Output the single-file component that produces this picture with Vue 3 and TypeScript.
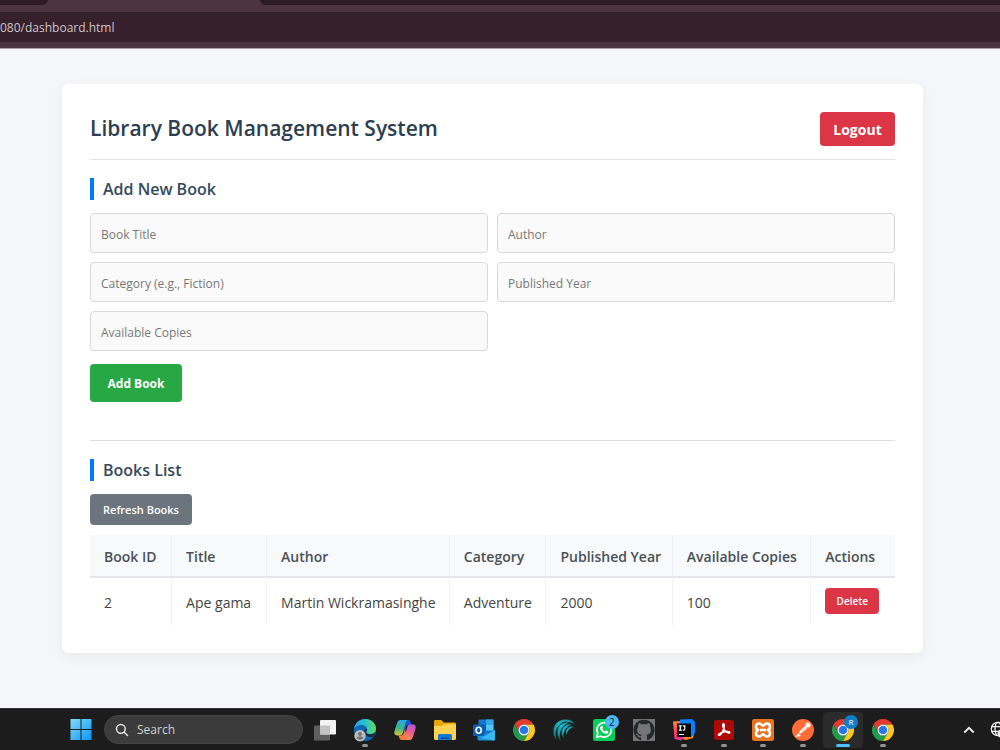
<script setup lang="ts">
import { reactive, ref } from 'vue'

interface Book {
  id: number
  title: string
  author: string
  category: string
  year: number
  copies: number
}

interface Field {
  key: 'title' | 'author' | 'category' | 'year' | 'copies'
  label: string
}

interface TaskbarApp {
  id: string
  name: string
  running?: boolean
  active?: boolean
}

const fields: Field[] = [
  { key: 'title', label: 'Book Title' },
  { key: 'author', label: 'Author' },
  { key: 'category', label: 'Category (e.g., Fiction)' },
  { key: 'year', label: 'Published Year' },
  { key: 'copies', label: 'Available Copies' },
]

const columns = ['Book ID', 'Title', 'Author', 'Category', 'Published Year', 'Available Copies', 'Actions']

const books = ref<Book[]>([
  { id: 2, title: 'Ape gama', author: 'Martin Wickramasinghe', category: 'Adventure', year: 2000, copies: 100 },
])

const form = reactive({ title: '', author: '', category: '', year: '', copies: '' })
const address = ref('080/dashboard.html')

const apps: TaskbarApp[] = [
  { id: 'tasks', name: 'Task View' },
  { id: 'edge', name: 'Edge', running: true },
  { id: 'copilot', name: 'Copilot' },
  { id: 'files', name: 'File Explorer' },
  { id: 'outlook', name: 'Outlook' },
  { id: 'chrome', name: 'Chrome' },
  { id: 'waves', name: 'Waves' },
  { id: 'whatsapp', name: 'WhatsApp' },
  { id: 'github', name: 'GitHub Desktop' },
  { id: 'idea', name: 'IntelliJ IDEA', running: true },
  { id: 'acrobat', name: 'Acrobat', running: true },
  { id: 'xampp', name: 'XAMPP', running: true },
  { id: 'postman', name: 'Postman', running: true },
  { id: 'chrome-profile', name: 'Chrome profile R', running: true, active: true },
  { id: 'chrome', name: 'Chrome window', running: true },
]

function addBook() {
  const nextId = Math.max(0, ...books.value.map((b) => b.id)) + 1
  books.value.push({
    id: nextId,
    title: form.title,
    author: form.author,
    category: form.category,
    year: Number(form.year),
    copies: Number(form.copies),
  })
}

function removeBook(id: number) {
  books.value = books.value.filter((b) => b.id !== id)
}
</script>

<template>
  <div class="screen">
    <header class="browser">
      <div class="tabs">
        <span class="tab-rest tab-left"></span>
        <span class="tab-rest tab-right"></span>
      </div>
      <div class="toolbar">
        <input v-model="address" class="address" type="text" aria-label="Address" />
      </div>
    </header>

    <main class="page">
      <div class="card">
        <div class="card-head">
          <h1>Library Book Management System</h1>
          <button type="button" class="btn logout">Logout</button>
        </div>

        <section>
          <h2>Add New Book</h2>
          <form @submit.prevent="addBook">
            <div class="fields">
              <input
                v-for="f in fields"
                :key="f.key"
                v-model="form[f.key]"
                type="text"
                :placeholder="f.label"
                :aria-label="f.label"
              />
            </div>
            <button type="submit" class="btn add">Add Book</button>
          </form>
        </section>

        <section class="list">
          <h2>Books List</h2>
          <button type="button" class="btn refresh">Refresh Books</button>
          <table>
            <colgroup>
              <col class="c-id" />
              <col class="c-title" />
              <col class="c-author" />
              <col class="c-category" />
              <col class="c-year" />
              <col class="c-copies" />
              <col class="c-actions" />
            </colgroup>
            <thead>
              <tr>
                <th v-for="c in columns" :key="c" scope="col">{{ c }}</th>
              </tr>
            </thead>
            <tbody>
              <tr v-for="b in books" :key="b.id">
                <td>{{ b.id }}</td>
                <td>{{ b.title }}</td>
                <td>{{ b.author }}</td>
                <td>{{ b.category }}</td>
                <td>{{ b.year }}</td>
                <td>{{ b.copies }}</td>
                <td><button type="button" class="btn delete" @click="removeBook(b.id)">Delete</button></td>
              </tr>
            </tbody>
          </table>
        </section>
      </div>
    </main>

    <footer class="taskbar">
      <button type="button" class="plain start" aria-label="Start">
        <svg viewBox="0 0 22 22" width="22" height="22">
          <defs>
            <linearGradient id="win" x1="0" y1="0" x2="22" y2="22" gradientUnits="userSpaceOnUse">
              <stop offset="0" stop-color="#7fdcfb" />
              <stop offset="1" stop-color="#0a93f5" />
            </linearGradient>
          </defs>
          <path fill="url(#win)" d="M.5 0h10v10H.5zM11.5 0h10v10h-10zM.5 11h10v10H.5zM11.5 11h10v10h-10z" />
        </svg>
      </button>

      <label class="search">
        <svg viewBox="0 0 16 16" width="16" height="16" fill="none" stroke="#e4e4e4" stroke-width="1.7" stroke-linecap="round">
          <circle cx="6.7" cy="6.7" r="5" />
          <path d="M10.5 10.5 14.3 14.3" />
        </svg>
        <input type="text" placeholder="Search" aria-label="Search" />
      </label>

      <nav class="apps" aria-label="Apps">
        <button
          v-for="(a, i) in apps"
          :key="i"
          type="button"
          class="plain app"
          :class="{ running: a.running, active: a.active }"
          :aria-label="a.name"
        >
          <svg v-if="a.id === 'tasks'" viewBox="0 0 24 24" width="24" height="24">
            <rect x="1" y="7.500" width="16" height="15" rx="1" fill="#5e5e5e" />
            <rect x="7" y="2" width="16" height="14.500" rx="1" fill="#f3f3f3" />
            <path d="M7 7.500h10v9H7z" fill="#c3c3c3" />
          </svg>

          <svg v-else-if="a.id === 'edge'" viewBox="0 0 24 24" width="24" height="24">
            <defs>
              <linearGradient id="edgeTop" x1="1" y1="8" x2="23" y2="9" gradientUnits="userSpaceOnUse">
                <stop offset="0" stop-color="#249ee0" />
                <stop offset=".5" stop-color="#2bc3d2" />
                <stop offset="1" stop-color="#62d957" />
              </linearGradient>
            </defs>
            <circle cx="12" cy="12" r="11" fill="#1068b8" />
            <path fill="url(#edgeTop)" d="M1 11C2 4.500 7 1 12.300 1 19 1 23 6 23 10.500c0 3.800-2.800 5.700-5.800 5.700-2.600 0-4.100-1-4.100-1.900 0-.8 1-1 1-3C14.100 8.700 11.500 7 8.300 7 4.900 7 2.200 9 1 11z" />
            <path fill="#1b2b39" d="M13.100 14.300c0 1 1.500 1.900 4.100 1.900 2.500 0 3.800-.6 5-1.600-.3 1.500-1 3-2.200 4.300-5 1-9.800-1.900-8.600-6.200.3-1.100 1.300-2 2.700-2 0 2-1 2.700-1 3.600z" />
            <circle cx="7" cy="17.700" r="5.700" fill="#bdbdbd" />
            <circle cx="7" cy="16" r="2" fill="#747474" />
            <path d="M3.600 20.600c.3-3 6.500-3 6.800 0-1.800 1.400-5 1.400-6.800 0z" fill="#747474" />
          </svg>

          <svg v-else-if="a.id === 'copilot'" viewBox="0 0 24 24" width="24" height="24">
            <defs>
              <linearGradient id="copA" x1="6" y1="2" x2="5" y2="19" gradientUnits="userSpaceOnUse">
                <stop offset="0" stop-color="#25a7ec" />
                <stop offset=".45" stop-color="#35b784" />
                <stop offset="1" stop-color="#f6cb26" />
              </linearGradient>
              <linearGradient id="copB" x1="19" y1="5" x2="12" y2="22" gradientUnits="userSpaceOnUse">
                <stop offset="0" stop-color="#a05be8" />
                <stop offset=".5" stop-color="#ec588f" />
                <stop offset="1" stop-color="#fb9a55" />
              </linearGradient>
            </defs>
            <path fill="#1d56cc" d="M10 2h5.400c1.300 0 1.900.9 2.300 2.200L18.700 7h-3c-1.900 0-2.500 1-3 2.600L10.500 17z" />
            <path fill="url(#copA)" d="M13 2H7.300C5.300 2 4.500 3.700 3.700 6L1.600 12.800c-.9 2.800 0 4.600 2.500 4.600h2.700c1.800 0 2.500-1 3-2.600L12.500 5c.5-1.600.8-2.300 2-3z" />
            <path fill="url(#copB)" d="M11 22h5.700c2 0 2.800-1.700 3.600-4l2.100-6.800c.9-2.800 0-4.600-2.500-4.600h-2.700c-1.800 0-2.500 1-3 2.600L11.500 19c-.5 1.600-.8 2.300-2 3z" />
            <path fill="#f5793d" d="M14 22H8.600c-1.300 0-1.900-.9-2.300-2.200l-.8-2.400h2.400c1.900 0 2.500-1 3-2.600l1.300-4.200z" />
          </svg>

          <svg v-else-if="a.id === 'files'" viewBox="0 0 24 24" width="24" height="24">
            <path fill="#e9a70b" d="M1 3.500C1 2.700 1.600 2 2.400 2h5.900l2.500 2.500h10.800c.8 0 1.400.6 1.400 1.400V12H1z" />
            <path fill="#ffd352" d="M1 8h7.800l2.300-1.800H23V20.600c0 .8-.6 1.400-1.400 1.400H2.400C1.600 22 1 21.400 1 20.600z" />
            <path fill="#147bd1" d="M5 22v-4.500c0-1 .6-1.500 1.500-1.500h11c.9 0 1.500.5 1.500 1.500V22z" />
            <path fill="#0b4f93" d="M8 19.500h8V21H8z" />
          </svg>

          <svg v-else-if="a.id === 'outlook'" viewBox="0 0 24 24" width="24" height="24">
            <rect x="6.500" y="1.500" width="15" height="17" rx="1" fill="#1976c9" />
            <path fill="#32a8e8" d="M14 1.500h7.500V7H14z" />
            <path fill="#50c8f5" d="M14 7h7.500v5.500H14z" />
            <path fill="#0b5aa8" d="M6.500 7H14v5.500H6.500z" />
            <path fill="#1b91dc" d="M5.500 12 14.500 17 23 11.800V21c0 .8-.6 1.500-1.400 1.500H7c-.8 0-1.500-.7-1.500-1.500z" />
            <path fill="#35b8f1" d="M23 12v9c0 .8-.6 1.500-1.400 1.500L9 20z" />
            <rect x="1" y="6.500" width="11.500" height="11.500" rx="1" fill="#0a5eb8" />
            <ellipse cx="6.700" cy="12.200" rx="2.600" ry="3" fill="none" stroke="#fff" stroke-width="1.600" />
          </svg>

          <svg v-else-if="a.id === 'chrome' || a.id === 'chrome-profile'" viewBox="0 0 24 24" width="24" height="24">
            <path fill="#e33b2e" d="M2.470 6.500A11 11 0 0 1 21.530 6.500H12A5.500 5.500 0 0 0 7.240 14.750z" />
            <path fill="#219b4b" d="M2.470 6.500 7.240 14.750A5.500 5.500 0 0 0 16.760 14.750L12 23A11 11 0 0 1 2.470 6.500z" />
            <path fill="#fcc720" d="M21.530 6.500A11 11 0 0 1 12 23L16.760 14.750A5.500 5.500 0 0 0 12 6.500z" />
            <circle cx="12" cy="12" r="5.500" fill="#fff" />
            <circle cx="12" cy="12" r="4.300" fill="#2878eb" />
          </svg>

          <svg v-else-if="a.id === 'waves'" viewBox="0 0 24 24" width="24" height="24">
            <defs>
              <linearGradient id="wave" x1="2" y1="18" x2="20" y2="3" gradientUnits="userSpaceOnUse">
                <stop offset="0" stop-color="#12808f" />
                <stop offset=".5" stop-color="#1fb8c6" />
                <stop offset="1" stop-color="#1d8d98" />
              </linearGradient>
            </defs>
            <g fill="url(#wave)" stroke="#1c1c1c" stroke-width=".6">
              <path d="M5 22.500C-1.500 16 0 3.500 11.500 1.300 17 .5 21.500 2.500 23 7c-2-2-4.500-2.800-7-2.500L12.500 4C5.500 6.500 2 14 5 22.500z" />
              <path d="M8.500 22.500C2.500 16 4.500 5 14 4.300c1.500 0 2.500.5 3 1.200C10.500 7 6.500 14 8.500 22.500z" />
              <path d="M12 20.500C7 15.500 10 6.500 17 6c1.500 0 2.500.5 3 1.300-5.500.7-9.500 6.200-8 13.200z" />
              <path d="M15 17.500C12 13 15 8.500 19.500 8.200c1.300 0 2.300.5 2.800 1.300-4.300.2-7.300 3.500-7.300 8z" />
            </g>
          </svg>

          <svg v-else-if="a.id === 'whatsapp'" viewBox="0 0 24 24" width="24" height="24">
            <rect x="1" y="1" width="22" height="22" rx="2.500" fill="#05cf58" />
            <path fill="none" stroke="#fff" stroke-width="1.700" stroke-linejoin="round" d="m4.700 19.300 1.100-4A7.200 7.200 0 1 1 8.700 18.200z" />
            <path fill="#fff" d="M9.200 8c.4-.4 1-.4 1.200 0l.7 1.600c.2.500-.5 1-.7 1.300.7 1.300 1.500 2 2.800 2.600.4-.3.800-1.100 1.300-.9l1.600.8c.4.200.3 1-.1 1.500-1 1.200-2.700 1-4.300.2-1.700-.9-3-2.300-3.600-4C7.800 9.800 8.400 8.700 9.200 8z" />
          </svg>

          <svg v-else-if="a.id === 'github'" viewBox="0 0 24 24" width="24" height="24">
            <path fill="#737577" d="M1 1h22v22H1z" />
            <path fill="#24292e" d="M12 1.800C6 1.800 1.500 6.400 1.500 12c0 4.900 3 8.800 7.200 10.200.5.100.7-.2.700-.5v-2.200c-3 .6-3.700-1.200-3.900-1.700-.3-.6-.8-1.200-1.300-1.500-.4-.2-.4-.7.200-.7 1 0 1.800 1 2.100 1.400.9 1.500 2.200 1.200 2.900.8.100-.6.400-1.200.8-1.500-2.500-.3-4.700-1.400-4.700-5 0-1.200.4-2.200 1.100-3-.1-.6-.4-1.700.1-3 1.100-.2 2.300.6 3 1.100a10 10 0 0 1 4.800 0c.9-.6 2.100-1.300 3-1.100.5 1.300.2 2.500.1 3 .7.800 1.100 1.800 1.100 3 0 3.700-2.200 4.700-4.700 5 .6.600.9 1.300.9 2.300v3.100c0 .3.200.6.700.5A10.300 10.300 0 0 0 22.500 12C22.500 6.400 18 1.800 12 1.800z" />
            <path fill="#737577" d="M9.400 22.600V19.500l5.500-.5v3.600z" />
            <path fill="#737577" d="M6.500 6.500c1-.2 2 .5 3 1.100a10 10 0 0 1 5 0c1-.6 2-1.300 3-1.100.4 1.300.2 2 .1 2.700 1.300 1.500 1.400 3.500.7 5.300-1 2-3.300 2.500-6.300 2.500s-5.300-.5-6.300-2.500c-.7-1.800-.6-3.800.7-5.300-.1-.7-.3-1.400.1-2.700z" />
          </svg>

          <svg v-else-if="a.id === 'idea'" viewBox="0 0 24 24" width="24" height="24">
            <defs>
              <linearGradient id="idea" x1="2" y1="4" x2="13" y2="23" gradientUnits="userSpaceOnUse">
                <stop offset="0" stop-color="#ff8934" />
                <stop offset=".5" stop-color="#ff2f6f" />
                <stop offset="1" stop-color="#d638a1" />
              </linearGradient>
            </defs>
            <path fill="#ff8a28" d="M3 19 16 12l6 4-1 4-7 2z" />
            <path fill="url(#idea)" d="M1 3.500 8 3l4 17-3 2.500-6.500-1.500z" />
            <path fill="#0a80ff" d="M8 1.500 20 1l3 3v11l-4 4.500L8 12z" />
            <rect x="5" y="5.500" width="14" height="13.500" fill="#090909" />
            <path fill="none" stroke="#fff" stroke-width="1.200" d="M6.800 7.800h3M8.300 7.800v4.400M6.800 12.200h3M10.800 7.800h2v3.300c0 1-1.200 1.500-2 .7M7 16.500h5" />
          </svg>

          <svg v-else-if="a.id === 'acrobat'" viewBox="0 0 24 24" width="24" height="24">
            <rect x="2" y="2" width="20" height="20" rx="3" fill="#ad0a08" />
            <path fill="none" stroke="#fff" stroke-width="1.500" stroke-linejoin="round" d="M6.800 17.200c-1.200-.2.600-2 4.200-3 3.800-1.100 7-.9 6.700.5-.4 1.400-4.200-1-5.700-3.700-1.500-2.600-1.700-5.200-.6-5.200 1.200 0 1 3.400-.2 6.300-1.200 2.800-3 5.300-4.400 5.100z" />
          </svg>

          <svg v-else-if="a.id === 'xampp'" viewBox="0 0 24 24" width="24" height="24">
            <rect x="1" y="1" width="22" height="22" rx="2.500" fill="#e9741f" />
            <g fill="none" stroke="#fff" stroke-width="2.500" stroke-linejoin="round">
              <path d="M8.500 5.500c2 0 2 2.200 3.500 2.200s1.500-2.200 3.500-2.200c2.200 0 3.500 1.300 3.500 3.200 0 1.700-1 2.800-2.200 3.300 1.200.5 2.200 1.600 2.200 3.300 0 1.900-1.300 3.200-3.500 3.200-2 0-2-2.200-3.500-2.200s-1.500 2.200-3.500 2.200C6.300 18.500 5 17.200 5 15.300c0-1.700 1-2.800 2.200-3.300C6 11.500 5 10.400 5 8.700c0-1.900 1.300-3.200 3.500-3.200z" />
              <path d="M9 12h6" />
            </g>
          </svg>

          <svg v-else-if="a.id === 'postman'" viewBox="0 0 24 24" width="24" height="24">
            <circle cx="12" cy="12" r="11" fill="#ff6c37" />
            <circle cx="17" cy="7" r="2.500" fill="#fff" />
            <path fill="#fff" d="m14 8 2.500 2-6.300 5.300-1.800-1.600z" />
            <path fill="none" stroke="#fff" stroke-width="1.200" stroke-linecap="round" d="m9.600 14.500-4 3.600 3.500-.5M15 8.500l-5.500 5" />
            <path fill="none" stroke="#ff6c37" stroke-width=".4" d="m15.700 9-5.200 4.800" />
          </svg>

          <span v-if="a.id === 'whatsapp'" class="badge count">2</span>
          <span v-if="a.id === 'chrome-profile'" class="badge profile">R</span>
        </button>
      </nav>

      <div class="tray">
        <button type="button" class="plain" aria-label="Show hidden icons">
          <svg viewBox="0 0 12 12" width="12" height="12" fill="none" stroke="#eee" stroke-width="1.800">
            <path d="M1.300 8.500 6 3.800l4.700 4.700" />
          </svg>
        </button>
        <button type="button" class="plain" aria-label="Network">
          <svg viewBox="0 0 18 18" width="18" height="18">
            <g fill="none" stroke="#eee" stroke-width="1.300">
              <circle cx="8" cy="8" r="6.700" />
              <ellipse cx="8" cy="8" rx="3" ry="6.700" />
              <path d="M1.500 5.700h13M1.500 10.300h13" />
            </g>
            <circle cx="12" cy="12.500" r="4.500" fill="#eee" />
            <path d="m10 10.500 4 4" stroke="#1c1c1c" stroke-width="1.200" />
          </svg>
        </button>
      </div>
    </footer>
  </div>
</template>

<style>
body {
  margin: 0;
  background: #f4f6fa;
}
</style>

<style scoped>
.screen {
  display: flex;
  flex-direction: column;
  min-height: 100vh;
  overflow: hidden;
  font-family: 'Open Sans', 'Noto Sans', sans-serif;
  font-size: 14px;
  color: #333;
}

.screen * {
  box-sizing: border-box;
}

button,
input {
  font-family: inherit;
}

.browser {
  background: #4c3541;
  border-bottom: 1px solid #a99fa8;
  padding-bottom: 6px;
}

.tabs {
  display: flex;
  justify-content: space-between;
  height: 12px;
}

.tab-rest {
  height: 5px;
  background: #2c1a24;
}

.tab-left {
  width: 48px;
  border-bottom-right-radius: 5px;
}

.tab-right {
  width: 74%;
  border-bottom-left-radius: 5px;
}

.toolbar {
  display: flex;
  align-items: center;
  height: 30px;
  background: #35202c;
}

.address {
  width: 100%;
  padding: 1px 0 0;
  border: 0;
  outline: 0;
  background: none;
  color: #cdc4c9;
  font-size: 12px;
  line-height: 18px;
}

.page {
  flex: 1;
  padding: 35px 77px 55px 62px;
  background: #f4f6fa;
}

.card {
  padding: 28px;
  border-radius: 7px;
  background: #fff;
  box-shadow: 0 4px 14px rgba(0, 0, 0, 0.05);
}

.card-head {
  display: flex;
  align-items: flex-start;
  justify-content: space-between;
  padding-bottom: 13px;
  border-bottom: 1px solid #e2e4e6;
}

h1 {
  margin: 0;
  color: #2c3e50;
  font-size: 21px;
  font-weight: 650;
  line-height: 32px;
}

h2 {
  margin: 18px 0 13px;
  padding-left: 9px;
  border-left: 4px solid #007bff;
  color: #34495e;
  font-size: 16px;
  font-weight: 650;
  line-height: 22px;
}

.btn {
  display: block;
  padding: 0;
  border: 0;
  border-radius: 4px;
  color: #fff;
  font-weight: 600;
  text-align: center;
  cursor: pointer;
}

.logout {
  width: 75px;
  height: 34px;
  background: #dc3545;
  font-size: 14px;
  font-weight: 700;
}

.fields {
  display: grid;
  grid-template-columns: 1fr 1fr;
  gap: 9px;
}

.fields input {
  width: 100%;
  height: 40px;
  padding: 2px 10px 0;
  border: 1px solid #d9d9d9;
  border-radius: 4px;
  outline: 0;
  background: #fafafa;
  color: #333;
  font-size: 12px;
}

.fields input::placeholder {
  color: #777;
  opacity: 1;
}

.add {
  width: 92px;
  height: 38px;
  margin-top: 13px;
  background: #28a745;
  font-size: 12px;
  font-weight: 700;
}

.list {
  margin-top: 38px;
  border-top: 1px solid #dcdee0;
}

.list h2 {
  margin-bottom: 13px;
}

.refresh {
  width: 102px;
  height: 31px;
  background: #6c757d;
  font-size: 11px;
}

table {
  width: 100%;
  margin-top: 10px;
  border-collapse: separate;
  border-spacing: 0;
  table-layout: fixed;
}

.c-id { width: 10.200%; }
.c-title { width: 11.800%; }
.c-author { width: 22.700%; }
.c-category { width: 12%; }
.c-year { width: 15.700%; }
.c-copies { width: 17.200%; }
.c-actions { width: 10.400%; }

th,
td {
  padding: 0 0 0 14px;
  border-right: 1px solid #f0f1f3;
  font-size: 14px;
  text-align: left;
  white-space: nowrap;
}

th:last-child,
td:last-child {
  border-right: 0;
}

th {
  height: 43px;
  padding-top: 2px;
  border-bottom: 2px solid #e3e6ea;
  background: #f8f9fb;
  color: #495057;
  font-weight: 600;
}

td {
  height: 47px;
  padding-top: 2px;
  color: #444;
}

.delete {
  width: 54px;
  height: 26px;
  margin-bottom: 3px;
  background: #dc3545;
  font-size: 10px;
}

.taskbar {
  display: flex;
  align-items: center;
  height: 42px;
  padding-left: 70px;
  border-top: 1px solid #303033;
  background: #1c1c1c;
}

.plain {
  display: flex;
  align-items: center;
  justify-content: center;
  padding: 0;
  border: 0;
  background: none;
}

.start {
  flex: none;
}

.search {
  display: flex;
  flex: none;
  align-items: center;
  gap: 8px;
  width: 199px;
  height: 29px;
  margin-left: 12px;
  padding: 0 10px;
  border: 1px solid #464646;
  border-radius: 15px;
  background: #3b3b3b;
}

.search input {
  width: 100%;
  min-width: 0;
  padding: 0;
  border: 0;
  outline: 0;
  background: none;
  color: #d2d2d2;
  font-size: 12px;
}

.search input::placeholder {
  color: #d2d2d2;
  opacity: 1;
}

.apps {
  display: flex;
  flex: none;
  width: 598px;
  margin-left: 2px;
}

.app {
  position: relative;
  flex: 1;
  height: 36px;
}

.app.active {
  border-radius: 4px;
  background: #2b2b2b;
}

.app.running::after {
  content: '';
  position: absolute;
  bottom: 1px;
  left: 50%;
  width: 6px;
  height: 3px;
  margin-left: -3px;
  border-radius: 2px;
  background: #949494;
}

.app.active::after {
  width: 14px;
  margin-left: -7px;
  background: #4cc2ff;
}

.badge {
  position: absolute;
  top: 3px;
  right: 5px;
  width: 14px;
  height: 14px;
  border-radius: 50%;
  font-size: 10px;
  line-height: 14px;
  text-align: center;
}

.count {
  background: #4db8f5;
  color: #10202c;
}

.profile {
  background: #0f7fc5;
  color: #fff;
  font-size: 8px;
}

.tray {
  display: flex;
  flex: none;
  align-items: center;
  gap: 15px;
  margin-left: auto;
  margin-right: -8px;
}
</style>
